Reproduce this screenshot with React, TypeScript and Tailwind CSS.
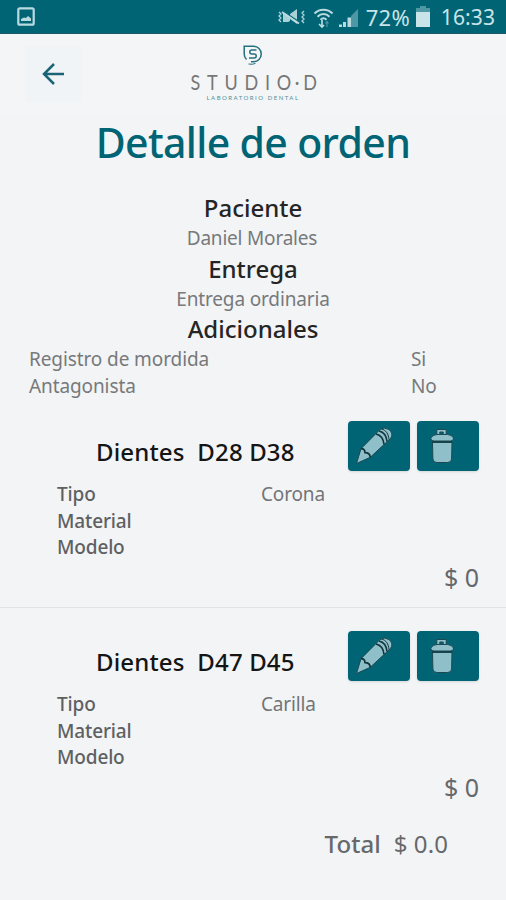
import React, { FC } from 'react';

interface Order {
  teeth: string;
  type: string;
  price: string;
}

const orders: Order[] = [
  { teeth: 'D28 D38', type: 'Corona', price: '$ 0' },
  { teeth: 'D47 D45', type: 'Carilla', price: '$ 0' },
];

const StatusBar: FC = () => (
  <header className="flex h-[34px] items-center justify-between border-b border-[#1b5866] bg-[#006475] pr-[11px] pl-[17px] text-[#c9e4e8]">
    <svg width="18" height="19" viewBox="0 0 18 19" fill="none">
      <rect x="1.3" y="1.3" width="15.4" height="16.4" rx="1.5" stroke="#b9dbe0" strokeWidth="2.2" />
      <path d="M4 14V12l3-1.500 2 .5 2-2 3 2.500v2.500z" fill="#b9dbe0" />
    </svg>
    <div className="flex items-center">
      <svg width="84" height="24" viewBox="0 0 84 24" fill="none">
        <g stroke="#a9d1d7" strokeWidth="1.3">
          <path d="M2 7l2 2-2 2 2 2-2 2 2 2M27 6l-2 2 2 2-2 2 2 2-2 2 2 2" />
        </g>
        <path d="M6 8h4l3 3v5l-2 1H6zM13 9l7-5v15l-7-5z" fill="#a9d1d7" />
        <path d="M5 5.500l18 12" stroke="#006475" strokeWidth="1.500" />
        <path d="M5 7l17 11.500" stroke="#b9dbe0" strokeWidth="1.800" />
        <g stroke="#b9dbe0" strokeWidth="2">
          <path d="M37.500 8.500c5-5 13-5 18 0M40.500 11.700c3.500-3.500 8.500-3.500 12 0M43.500 14.700c2-2 4-2 6 0" />
        </g>
        <path d="M45 15v7M42 19l3 3 2-2" stroke="#b9dbe0" strokeWidth="1.700" />
        <path d="M50 22v-5M48.500 18.500l1.500-2 1.500 2" stroke="#4d98a4" strokeWidth="1.200" />
        <path d="M81 4v18H74V11z" fill="#4d98a4" />
        <path d="M62 19.500h3v2.500h-3zM66 17h3v5h-3zM70.500 12.500h3.500v9.500h-3.500z" fill="#b9dbe0" />
      </svg>
      <span className="ml-[5px] w-[46px] text-[22px] leading-none tracking-[0.200px]">72%</span>
      <svg className="ml-[4px]" width="14" height="21" viewBox="0 0 14 21">
        <path d="M4 0h6v2h4v5H0V2h4z" fill="#4d98a4" />
        <path d="M0 6h14v15H0z" fill="#c9e4e8" />
      </svg>
      <span className="mt-[2px] ml-[11px] text-[21px] leading-none tracking-[0.100px]">16:33</span>
    </div>
  </header>
);

const Logo: FC = () => (
  <div className="flex w-[130px] flex-col items-center">
    <svg width="20" height="20" viewBox="0 0 20 20" fill="none" stroke="#24707f">
      <path d="M3.500 14.500A8 8 0 0 1 1.200 9V1.200H10.500A7.700 7.700 0 0 1 10.500 16.700H8" strokeWidth="1.500" />
      <path d="M5.500 19q4 .8 7-.6" strokeWidth="1" />
      <path d="M13.500 5H8.800a2 2 0 0 0 0 4h2.400a2 2 0 0 1 0 4H6" strokeWidth="1.500" />
    </svg>
    <div className="mt-[4px] ml-[8px] flex h-[24px] origin-center scale-x-[0.820] items-center font-['Lato'] text-[22px] tracking-[8.200px] whitespace-nowrap text-[#777777]">
      <span>STUDI</span>
      <span className="tracking-[4.500px]">O·</span>
      <span>D</span>
    </div>
    <div className="mt-[1px] font-['Lato'] text-[6px] leading-[7px] tracking-[1.500px] whitespace-nowrap text-[#4c919c]">
      LABORATORIO DENTAL
    </div>
  </div>
);

const PencilIcon: FC = () => (
  <svg width="40" height="40" viewBox="0 0 40 40" fill="#8fbfc8" stroke="#1b4953" strokeWidth="1" strokeLinejoin="round">
    <path d="M1.500 37.500L6 22.700 25 3.500Q29 .5 34 3.500 39 8 35.500 12.500L15.300 31.300z" />
    <path d="M6 22.700c3 0 4 1.500 4 4 3 0 5 1.500 5.300 4.600M21 8c4.500 1 7.500 5 8 10.500M24 5c4.500 1 7.500 5 8 10.500" fill="none" stroke="#12343d" strokeWidth="1.700" />
    <path d="M26.500 3c4.500 1 7 5 7.500 10.500" fill="none" stroke="#12343d" strokeWidth="1" />
  </svg>
);

const TrashIcon: FC = () => (
  <svg width="26" height="36" viewBox="0 0 26 36" fill="#8fbfc8" stroke="#1b4953" strokeWidth="1" strokeLinejoin="round">
    <path d="M2.500 14h19.500l-.4 17q-.3 3.500-4 3.500H6.900q-3.700 0-4-3.500z" />
    <path d="M2.500 14h19.500" stroke="#12343d" strokeWidth="1.600" />
    <path d="M.8 11V10Q3 6.500 7 6.500h10.500q4 0 6 3.500v1q-1 2-3 2H4q-2 0-3.200-2z" />
    <path d="M6.800 6.500V1.500h9.400v5h-3V4h-3.400v2.500z" />
  </svg>
);

const OrderItem: FC<{ order: Order }> = ({ order }) => (
  <section className="h-[210px]">
    <div className="flex h-[54px] items-start pr-[27px]">
      <h3 className="mt-[15px] ml-[96px] w-[252px] text-[24px] leading-[32px] font-medium tracking-[0.150px] whitespace-pre text-[#151515]">
        {'Dientes  ' + order.teeth}
      </h3>
      <button className="flex h-[50px] w-[62px] justify-start rounded-[4px] bg-[#006475] pt-[5px] pl-[7px] shadow">
        <PencilIcon />
      </button>
      <button className="ml-[7px] flex h-[50px] w-[62px] justify-start rounded-[4px] bg-[#006475] pt-[7px] pl-[13px] shadow">
        <TrashIcon />
      </button>
    </div>
    <div className="mt-[6px] grid grid-cols-[204px_1fr] pl-[57px] text-[19px] leading-[26.700px] tracking-[-0.150px] text-[#737577]">
      <span className="font-medium text-[#5e6062]">Tipo</span>
      <span>{order.type}</span>
      <span className="font-medium text-[#5e6062]">Material</span>
      <span />
      <span className="font-medium text-[#5e6062]">Modelo</span>
      <span />
    </div>
    <div className="-mt-[1px] pr-[27px] text-right text-[25px] leading-[34px] text-[#66686a]">{order.price}</div>
  </section>
);

export default function App() {
  return (
    <div className="h-[900px] w-[506px] overflow-hidden bg-[#f2f4f6] font-['Noto_Sans',sans-serif]">
      <StatusBar />
      <div className="grid h-[80px] grid-cols-[188px_130px_1fr] bg-[#f4f5f6] pt-[11px]">
        <button className="mt-[1px] ml-[25px] flex h-[56px] w-[57px] items-center justify-center bg-[#f0f4f7]">
          <svg width="24" height="24" viewBox="0 0 24 24" fill="none" stroke="#1b6475" strokeWidth="2.500">
            <path d="M22 12H2M12 2L2 12l10 10" />
          </svg>
        </button>
        <Logo />
      </div>
      <h1 className="text-center text-[41px] leading-[56px] font-medium tracking-[-0.650px] text-[#006475]">
        Detalle de orden
      </h1>
      <div className="mt-[22px] text-center">
        <h2 className="text-[24px] leading-[32px] font-medium text-[#252525]">Paciente</h2>
        <p className="pr-[2px] text-[19px] leading-[28px] tracking-[-0.200px] text-[#77797b]">Daniel Morales</p>
        <h2 className="mt-[1px] text-[24px] leading-[32px] font-medium text-[#252525]">Entrega</h2>
        <p className="text-[19px] leading-[28px] tracking-[-0.150px] text-[#77797b]">Entrega ordinaria</p>
        <h2 className="text-[24px] leading-[32px] font-medium text-[#252525]">Adicionales</h2>
      </div>
      <div className="mt-[1px] grid grid-cols-[382px_1fr] pl-[29px] text-[19px] leading-[27px] tracking-[-0.100px] text-[#77797b]">
        <span>Registro de mordida</span>
        <span>Si</span>
        <span>Antagonista</span>
        <span>No</span>
      </div>
      <main className="mt-[21px]">
        <OrderItem order={orders[0]} />
        <hr className="-mt-[24px] mb-[23px] border-[#e1e4e6]" />
        <OrderItem order={orders[1]} />
      </main>
      <div className="-mt-[15px] pr-[58px] text-right text-[24px] tracking-[0.100px] whitespace-pre text-[#66686a]">
        <span className="font-medium">Total</span>
        {'  $ 0.0'}
      </div>
    </div>
  );
}
